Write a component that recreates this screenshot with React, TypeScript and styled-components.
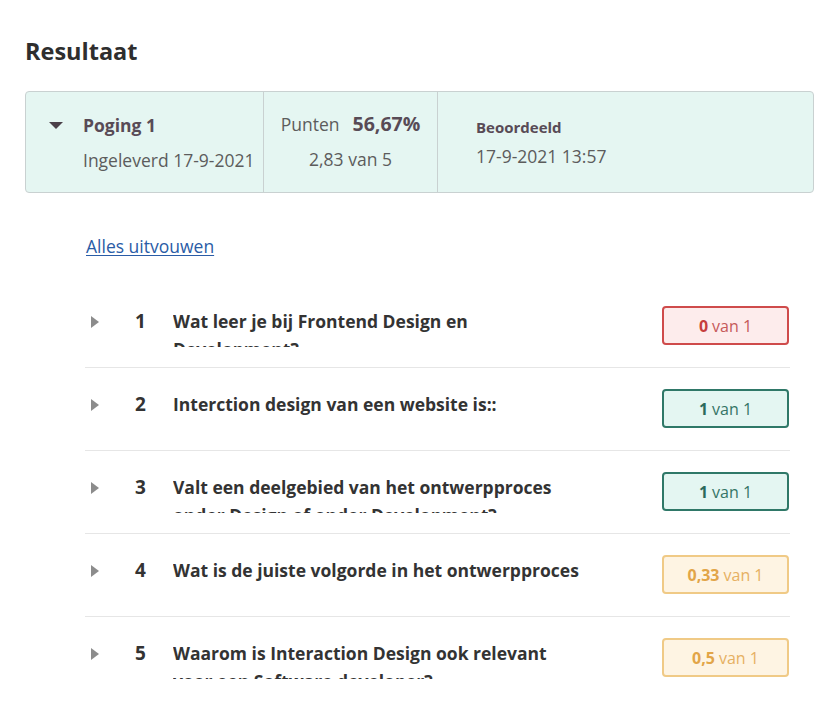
import React from "react";
import styled, { createGlobalStyle } from "styled-components";

const GlobalStyle = createGlobalStyle`
  html, body {
    margin: 0;
    padding: 0;
    background: #ffffff;
  }
  body {
    font-family: "Open Sans", "Liberation Sans", sans-serif;
    color: #333333;
  }
`;

const Page = styled.main`
  padding: 35px 26px 0 25px;
`;

const Heading = styled.h2`
  margin: 0 0 24px;
  font-size: 23.5px;
  line-height: 32px;
  font-weight: 700;
  color: #2e2e2e;
`;

const Summary = styled.section`
  display: grid;
  grid-template-columns: 238px 174px 1fr;
  height: 100px;
  background: #e5f6f2;
  border: 1px solid #c9d1d1;
  border-radius: 4px;
`;

const Cell = styled.div<{ $divider?: boolean }>`
  border-right: ${(p) => (p.$divider ? "1px solid #c9d1d1" : "none")};
`;

const AttemptCell = styled(Cell)`
  display: flex;
  align-items: flex-start;
  padding: 20px 0 0 23px;
`;

const CaretDown = styled.svg`
  flex: none;
  width: 14px;
  height: 7px;
  margin: 10px 20px 0 0;
  fill: #4b4049;
`;

const Stack = styled.div`
  display: flex;
  flex-direction: column;
`;

const Strong = styled.span<{ $size?: number }>`
  font-size: ${(p) => p.$size ?? 17.5}px;
  line-height: 26px;
  font-weight: 700;
  color: #584b56;
`;

const Muted = styled.span`
  font-size: 17.5px;
  line-height: 26px;
  color: #5c5c5c;
`;

const SubLine = styled(Muted)`
  margin-top: 9px;
`;

const PointsCell = styled(Cell)`
  display: flex;
  flex-direction: column;
  align-items: center;
  padding-top: 19px;
`;

const PointsLine = styled.div`
  display: flex;
  align-items: baseline;
  gap: 13px;
`;

const GradedCell = styled(Cell)`
  display: flex;
  flex-direction: column;
  padding: 25px 0 0 38px;
`;

const Label = styled.span`
  font-size: 15px;
  line-height: 20px;
  font-weight: 700;
  color: #584b56;
`;

const GradedDate = styled(Muted)`
  margin-top: 6px;
`;

const Content = styled.div`
  padding: 0 24px 0 60px;
`;

const ExpandLink = styled.a`
  display: block;
  width: fit-content;
  margin: 41px 0 27px 1px;
  font-size: 17.5px;
  line-height: 24px;
  color: #2a5ca6;
  text-decoration: underline;
  text-underline-offset: 2px;
`;

const List = styled.ol`
  list-style: none;
  margin: 0;
  padding: 0;
`;

const Row = styled.li`
  display: flex;
  align-items: flex-start;
  height: 83px;
  box-sizing: border-box;
  padding-top: 21px;
  border-bottom: 1px solid #e6e6e6;

  &:last-child {
    border-bottom: none;
  }
`;

const CaretRight = styled.svg`
  flex: none;
  width: 8px;
  height: 12px;
  margin: 10px 36px 0 6px;
  fill: #8c8c8c;
`;

const Number = styled.span`
  flex: none;
  width: 38px;
  margin-top: 1px;
  font-size: 19px;
  line-height: 28px;
  font-weight: 700;
  color: #333333;
`;

const Title = styled.span`
  flex: none;
  width: 410px;
  height: 40px;
  margin-top: 1px;
  overflow: hidden;
  font-size: 17.5px;
  line-height: 28px;
  font-weight: 700;
  color: #333333;
`;

type Tone = "red" | "green" | "amber";

const tones: Record<Tone, { border: string; bg: string; strong: string; text: string }> = {
  red: { border: "#cf4b4b", bg: "#fdecec", strong: "#c63d3d", text: "#c65a5a" },
  green: { border: "#2f7868", bg: "#e4f6f2", strong: "#2c6a5c", text: "#357566" },
  amber: { border: "#f0ca86", bg: "#fef4e3", strong: "#e2a548", text: "#e6b062" },
};

const Badge = styled.span<{ $tone: Tone }>`
  flex: none;
  margin-left: auto;
  margin-right: 1px;
  width: 127px;
  height: 39px;
  box-sizing: border-box;
  display: flex;
  align-items: center;
  justify-content: center;
  gap: 4px;
  border: 2px solid ${(p) => tones[p.$tone].border};
  border-radius: 4px;
  background: ${(p) => tones[p.$tone].bg};
  font-size: 16px;
  color: ${(p) => tones[p.$tone].text};

  b {
    font-weight: 700;
    color: ${(p) => tones[p.$tone].strong};
  }
`;

const questions: { n: number; title: string; score: string; tone: Tone }[] = [
  { n: 1, title: "Wat leer je bij Frontend Design en Development?", score: "0", tone: "red" },
  { n: 2, title: "Interction design van een website is::", score: "1", tone: "green" },
  { n: 3, title: "Valt een deelgebied van het ontwerpproces onder Design of onder Development?", score: "1", tone: "green" },
  { n: 4, title: "Wat is de juiste volgorde in het ontwerpproces", score: "0,33", tone: "amber" },
  { n: 5, title: "Waarom is Interaction Design ook relevant voor een Software developer?", score: "0,5", tone: "amber" },
];

export default function App() {
  return (
    <>
      <GlobalStyle />
      <Page>
        <Heading>Resultaat</Heading>
        <Summary>
          <AttemptCell $divider>
            <CaretDown viewBox="0 0 14 7">
              <polygon points="0,0 14,0 7,7" />
            </CaretDown>
            <Stack>
              <Strong>Poging 1</Strong>
              <SubLine>Ingeleverd 17-9-2021</SubLine>
            </Stack>
          </AttemptCell>
          <PointsCell $divider>
            <PointsLine>
              <Muted>Punten</Muted>
              <Strong $size={19.5}>56,67%</Strong>
            </PointsLine>
            <SubLine>2,83 van 5</SubLine>
          </PointsCell>
          <GradedCell>
            <Label>Beoordeeld</Label>
            <GradedDate>17-9-2021 13:57</GradedDate>
          </GradedCell>
        </Summary>
        <Content>
          <ExpandLink href="#">Alles uitvouwen</ExpandLink>
          <List>
            {questions.map((q) => (
              <Row key={q.n}>
                <CaretRight viewBox="0 0 8 12">
                  <polygon points="0,0 8,6 0,12" />
                </CaretRight>
                <Number>{q.n}</Number>
                <Title>{q.title}</Title>
                <Badge $tone={q.tone}>
                  <b>{q.score}</b> van 1
                </Badge>
              </Row>
            ))}
          </List>
        </Content>
      </Page>
    </>
  );
}
